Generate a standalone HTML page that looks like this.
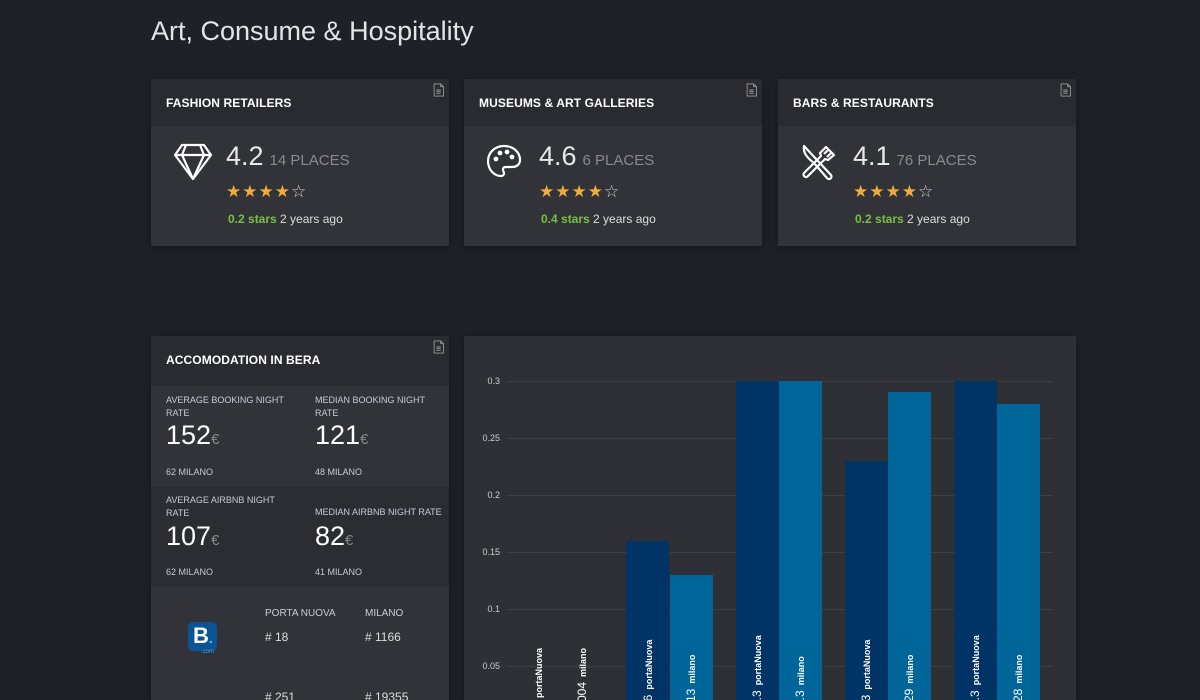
<!DOCTYPE html>
<html><head><meta charset="utf-8"><style>
*{margin:0;padding:0;box-sizing:border-box}
html,body{width:1200px;height:700px;overflow:hidden}
body{background:#1f2128;font-family:"Liberation Sans",sans-serif;color:#fff}
#root{position:relative;width:1200px;height:700px;overflow:hidden}
h1{position:absolute;left:151px;top:16px;font-weight:normal;font-size:27px;color:#e4e4e6}
.card{position:absolute;background:#323338;box-shadow:0 2px 8px rgba(0,0,0,.35);overflow:hidden}
.hd{background:#2a2b30;height:47px;padding:17px 15px;font-weight:bold;font-size:12px;letter-spacing:.1px}
.doc{position:absolute;right:5px;top:4px}
.icon{position:absolute;left:22px;top:64px}
.num{position:absolute;left:75px;top:62px;font-size:27px;color:#e8e8e8}
.num span{font-size:15px;color:#8a8a8e;margin-left:6px}
.stars{position:absolute;left:75px;top:103px;font-size:17px;color:#f0a93b;letter-spacing:1px}
.stars b{color:#ccc;font-weight:normal}
.sub{position:absolute;left:77px;top:133px;font-size:12px;color:#ddd}
.sub em{font-style:normal;color:#78c043;font-weight:bold}
.cell{position:absolute;font-size:9px;color:#c8cad6;line-height:13px}
.big{position:absolute;font-size:27px;color:#fff}
.big span{font-size:15px;color:#888}
.sm{position:absolute;font-size:9px;color:#c8cad6}
.yl{position:absolute;font-size:9px;color:#ccc;text-align:right;width:40px}
.gl{position:absolute;left:43px;width:545px;height:1px;background:#3e3f45}
.bar{position:absolute}
.vt{position:absolute;transform:rotate(-90deg);transform-origin:left top;font-size:9px;color:#fff;white-space:nowrap;font-weight:bold}
.vt i{font-style:normal;font-weight:normal;font-size:12px}
</style></head><body><div id="root">
<h1>Art, Consume &amp; Hospitality</h1>

<svg width="0" height="0" style="position:absolute"><defs>
<symbol id="d" viewBox="0 0 10 12"><path d="M1 .5h6l2.5 2.5v8.5h-8.5z M7 .5v2.5h2.5 M3 6h4M3 7.5h4M3 9h4" fill="none" stroke="#999" stroke-width=".8"/></symbol></defs></svg>

<div class="card" style="left:151px;top:79px;width:298px;height:167px">
<div class="hd">FASHION RETAILERS</div><svg class="doc" width="11" height="14"><use href="#d"/></svg>
<svg class="icon" width="40" height="38" viewBox="0 0 40 38" fill="none" stroke="#fff" stroke-width="2.2" stroke-linejoin="round"><path d="M9 2h22l7 10-18 24L2 12z M2 12h36 M13 2l-4 10 11 24 11-24-4-10"/></svg>
<div class="num">4.2<span>14 PLACES</span></div>
<div class="stars">★★★★<b>☆</b></div>
<div class="sub"><em>0.2 stars</em> 2 years ago</div>
</div>

<div class="card" style="left:464px;top:79px;width:298px;height:167px">
<div class="hd">MUSEUMS &amp; ART GALLERIES</div><svg class="doc" width="11" height="14"><use href="#d"/></svg>
<svg class="icon" width="36" height="36" viewBox="0 0 36 36" fill="none" stroke="#fff" stroke-width="2.2"><path d="M18 3C9 3 2 9.5 2 18s6 15 13 15c3 0 3.5-2.5 2.5-4.5s-1-4.5 2.5-4.5h6c5 0 8-3 8-7C34 9 27 3 18 3z"/><circle cx="10" cy="16" r="1.3" fill="#fff"/><circle cx="14" cy="10" r="1.3" fill="#fff"/><circle cx="21" cy="9" r="1.3" fill="#fff"/><circle cx="26" cy="14" r="1.3" fill="#fff"/></svg>
<div class="num">4.6<span>6 PLACES</span></div>
<div class="stars">★★★★<b>☆</b></div>
<div class="sub"><em>0.4 stars</em> 2 years ago</div>
</div>

<div class="card" style="left:778px;top:79px;width:298px;height:167px">
<div class="hd">BARS &amp; RESTAURANTS</div><svg class="doc" width="11" height="14"><use href="#d"/></svg>
<svg class="icon" width="38" height="38" viewBox="0 0 38 38" fill="none" stroke="#fff" stroke-width="2.2" stroke-linejoin="round"><path d="M4 3l27 29a2.5 2.5 0 0 1-4 3L14 20C6 14 3 9 4 3z"/><path d="M26 4l8 8-6 5-3-1L8 33a2.5 2.5 0 0 1-4-3l17-17-1-3z M29 6l-5 5 M32 9l-5 5"/></svg>
<div class="num">4.1<span>76 PLACES</span></div>
<div class="stars">★★★★<b>☆</b></div>
<div class="sub"><em>0.2 stars</em> 2 years ago</div>
</div>

<div class="card" style="left:151px;top:336px;width:298px;height:364px;background:#2c2d32">
<div class="hd" style="height:50px">ACCOMODATION IN BERA</div><svg class="doc" width="11" height="14"><use href="#d"/></svg>
<div style="position:absolute;left:0;top:50px;width:298px;height:100px;background:#323338"></div>
<div style="position:absolute;left:0;top:251px;width:298px;height:130px;background:#323338"></div>
<div class="cell" style="left:15px;top:58px">AVERAGE BOOKING NIGHT<br>RATE</div>
<div class="cell" style="left:164px;top:58px">MEDIAN BOOKING NIGHT<br>RATE</div>
<div class="big" style="left:15px;top:84px">152<span>€</span></div>
<div class="big" style="left:164px;top:84px">121<span>€</span></div>
<div class="sm" style="left:15px;top:131px">62 MILANO</div>
<div class="sm" style="left:164px;top:131px">48 MILANO</div>
<div class="cell" style="left:15px;top:158px">AVERAGE AIRBNB NIGHT<br>RATE</div>
<div class="cell" style="left:164px;top:170px">MEDIAN AIRBNB NIGHT RATE</div>
<div class="big" style="left:15px;top:185px">107<span>€</span></div>
<div class="big" style="left:164px;top:185px">82<span>€</span></div>
<div class="sm" style="left:15px;top:231px">62 MILANO</div>
<div class="sm" style="left:164px;top:231px">41 MILANO</div>
<div style="position:absolute;left:37px;top:286px;width:29px;height:29px;background:#0b5394;border-radius:5px;color:#fff;font-weight:bold;font-size:22px;padding:1px 0 0 5px">B<span style="color:#4fc3f7;font-size:14px">.</span></div>
<div style="position:absolute;left:50px;top:313px;font-size:6px;color:#3aa0e0">.com</div>
<div class="sm" style="left:114px;top:272px;font-size:10px">PORTA NUOVA</div>
<div class="sm" style="left:214px;top:272px;font-size:10px">MILANO</div>
<div style="position:absolute;left:114px;top:294px;font-size:12px;color:#ddd"># 18</div>
<div style="position:absolute;left:214px;top:294px;font-size:12px;color:#ddd"># 1166</div>
<div style="position:absolute;left:114px;top:354px;font-size:12px;color:#ddd"># 251</div>
<div style="position:absolute;left:214px;top:354px;font-size:12px;color:#ddd"># 19355</div>
</div>

<div class="card" style="left:464px;top:336px;width:612px;height:364px;background:#2f3035">
<div class="gl" style="top:45px"></div><div class="gl" style="top:102px"></div><div class="gl" style="top:159px"></div><div class="gl" style="top:216px"></div><div class="gl" style="top:273px"></div><div class="gl" style="top:330px"></div>
<div class="yl" style="left:-4px;top:40px">0.3</div>
<div class="yl" style="left:-4px;top:97px">0.25</div>
<div class="yl" style="left:-4px;top:154px">0.2</div>
<div class="yl" style="left:-4px;top:211px">0.15</div>
<div class="yl" style="left:-4px;top:268px">0.1</div>
<div class="yl" style="left:-4px;top:325px">0.05</div>
<div class="bar" style="left:162px;top:205px;width:43px;height:200px;background:#003366"></div>
<div class="bar" style="left:206px;top:239px;width:43px;height:200px;background:#006699"></div>
<div class="bar" style="left:272px;top:45px;width:43px;height:400px;background:#003366"></div>
<div class="bar" style="left:315px;top:45px;width:43px;height:400px;background:#006699"></div>
<div class="bar" style="left:381px;top:125px;width:43px;height:300px;background:#003366"></div>
<div class="bar" style="left:424px;top:56px;width:43px;height:400px;background:#006699"></div>
<div class="bar" style="left:490px;top:45px;width:43px;height:400px;background:#003366"></div>
<div class="bar" style="left:533px;top:68px;width:43px;height:400px;background:#006699"></div>
<div class="vt" style="left:70px;top:362px">portaNuova</div>
<div class="vt" style="left:111px;top:376px"><i>0.004</i>&nbsp; milano</div>
<div class="vt" style="left:177px;top:382px"><i>0.16</i>&nbsp; portaNuova</div>
<div class="vt" style="left:220px;top:376px"><i>0.13</i>&nbsp; milano</div>
<div class="vt" style="left:286px;top:371px"><i>0.3</i>&nbsp; portaNuova</div>
<div class="vt" style="left:329px;top:371px"><i>0.3</i>&nbsp; milano</div>
<div class="vt" style="left:395px;top:382px"><i>0.23</i>&nbsp; portaNuova</div>
<div class="vt" style="left:438px;top:376px"><i>0.29</i>&nbsp; milano</div>
<div class="vt" style="left:504px;top:371px"><i>0.3</i>&nbsp; portaNuova</div>
<div class="vt" style="left:547px;top:376px"><i>0.28</i>&nbsp; milano</div>
</div>
</div></body></html>
